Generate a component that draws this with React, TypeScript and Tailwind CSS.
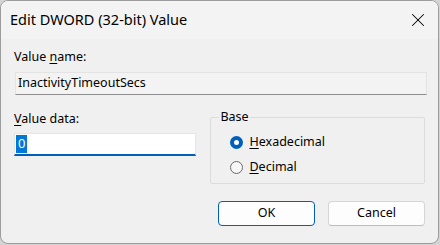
import { X } from 'lucide-react';

const font = { fontFamily: '"Noto Sans", "Open Sans", sans-serif' };

const Radio = ({ checked, label, mnemonic }: { checked?: boolean; label: string; mnemonic: string }) => (
  <div className="flex items-center h-[14px] gap-[6px]">
    {checked ? (
      <span className="flex h-[13px] w-[13px] items-center justify-center rounded-full bg-[#005fb8]">
        <span className="h-[5px] w-[5px] rounded-full bg-white" />
      </span>
    ) : (
      <span className="h-[13px] w-[13px] rounded-full border border-[#6a6a6a] bg-[#f6f6f6]" />
    )}
    <span className="text-[12.5px] leading-none text-black">
      <span className="underline underline-offset-2">{mnemonic}</span>
      {label.slice(mnemonic.length)}
    </span>
  </div>
);

export default function App() {
  return (
    <div className="w-[440px] h-[245px] bg-[#d4d4d4]" style={font}>
      <div className="flex h-[244px] w-[439px] flex-col overflow-hidden rounded-[8px] border border-[#9c9c9c] bg-[#f0f0f0]">
        {/* title bar */}
        <div className="flex h-[38px] shrink-0 items-center justify-between bg-[#f3f3f3] pl-[9px] pr-[9px]">
          <span className="text-[14.5px] text-black">Edit DWORD (32-bit) Value</span>
          <X size={22} strokeWidth={1.1} className="text-black" />
        </div>

        <div className="flex flex-col px-[13px]">
          <span className="mt-[10px] h-[16px] text-[12.5px] leading-[16px] text-black">
            Value <span className="underline underline-offset-2">n</span>ame:
          </span>
          <div className="mt-[7px] ml-[1px] flex h-[23px] w-[412px] items-center border border-[#e3e3e3] border-b-[#8e8e8e] bg-[#f3f3f3] pl-[2px] text-[12.5px] text-black">
            InactivityTimeoutSecs
          </div>

          <div className="mt-[4px] flex gap-[14px]">
            <div className="flex w-[184px] flex-col">
              <span className="mt-[12px] h-[16px] text-[12.5px] leading-[16px] text-black">
                <span className="underline underline-offset-2">V</span>alue data:
              </span>
              <div className="mt-[6px] flex h-[23px] items-center border border-[#e5e5e5] border-b-2 border-b-[#005fb8] bg-white pl-[1px]">
                <span className="flex h-[18px] items-center bg-[#0078d7] px-[2px] text-[13px] text-white">0</span>
              </div>
            </div>

            <fieldset className="mt-[11px] h-[74px] w-[216px] rounded-[2px] border border-[#dcdcdc] px-[19px] pt-[11px]">
              <legend className="ml-[-11px] px-[1px] text-[12.5px] leading-[14px] text-black">Base</legend>
              <div className="flex flex-col gap-[11px]">
                <Radio checked label="Hexadecimal" mnemonic="H" />
                <Radio label="Decimal" mnemonic="D" />
              </div>
            </fieldset>
          </div>

          <div className="mt-[17px] flex justify-end gap-[13px]">
            <button className="flex h-[25px] w-[97px] items-center justify-center rounded-[4px] border border-[#005fb8] bg-[#fdfdfd] text-[12.5px] text-black">
              OK
            </button>
            <button className="flex h-[25px] w-[97px] items-center justify-center rounded-[4px] border border-[#d5d5d5] border-b-[#bdbdbd] bg-[#fdfdfd] text-[12.5px] text-black">
              Cancel
            </button>
          </div>
        </div>
      </div>
    </div>
  );
}
